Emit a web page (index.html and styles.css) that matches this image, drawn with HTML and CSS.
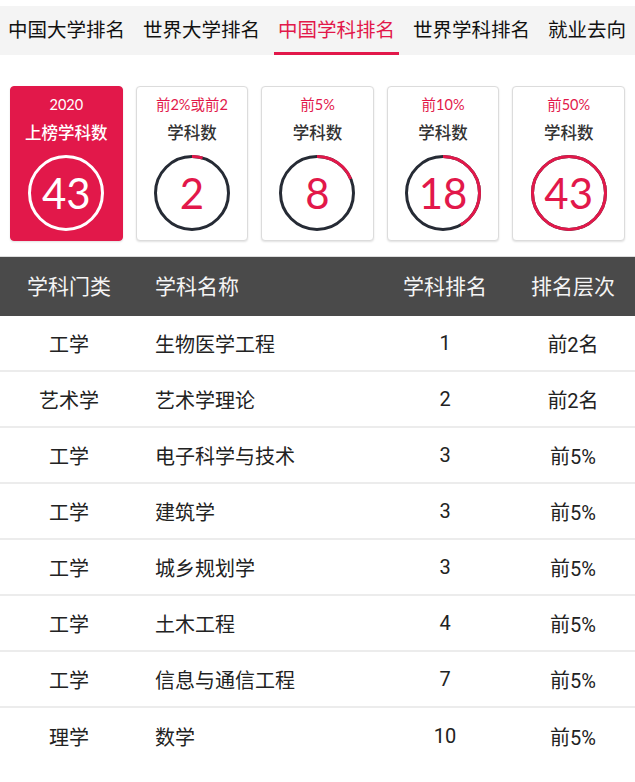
FILE: index.html
```html
<!DOCTYPE html>
<html lang="zh-CN">
<head>
    <meta charset="UTF-8">
    <meta name="viewport" content="width=device-width, initial-scale=1.0">
    <title>中国学科排名</title>
    <link rel="stylesheet" href="styles.css">
</head>
<body>

    <!-- Tabs -->
    <div class="tabs">
        <div class="tab">中国大学排名</div>
        <div class="tab">世界大学排名</div>
        <div class="tab active">中国学科排名</div>
        <div class="tab">世界学科排名</div>
        <div class="tab">就业去向</div>
    </div>

    <!-- Summary cards -->
    <div class="cards">
        <div class="card total">
            <div class="card-top">2020</div>
            <div class="card-title">上榜学科数</div>
            <div class="ring">
                <svg viewBox="0 0 76 76">
                    <circle cx="38" cy="38" r="36.5" class="ring-full"></circle>
                </svg>
                <span class="ring-num">43</span>
            </div>
        </div>

        <div class="card">
            <div class="card-top">前2%或前2</div>
            <div class="card-title">学科数</div>
            <div class="ring">
                <svg viewBox="0 0 76 76">
                    <circle cx="38" cy="38" r="36.5" class="ring-bg"></circle>
                    <circle cx="38" cy="38" r="36.5" class="ring-bar" stroke-dasharray="10.7 229.4"></circle>
                </svg>
                <span class="ring-num">2</span>
            </div>
        </div>

        <div class="card">
            <div class="card-top">前5%</div>
            <div class="card-title">学科数</div>
            <div class="ring">
                <svg viewBox="0 0 76 76">
                    <circle cx="38" cy="38" r="36.5" class="ring-bg"></circle>
                    <circle cx="38" cy="38" r="36.5" class="ring-bar" stroke-dasharray="42.7 229.4"></circle>
                </svg>
                <span class="ring-num">8</span>
            </div>
        </div>

        <div class="card">
            <div class="card-top">前10%</div>
            <div class="card-title">学科数</div>
            <div class="ring">
                <svg viewBox="0 0 76 76">
                    <circle cx="38" cy="38" r="36.5" class="ring-bg"></circle>
                    <circle cx="38" cy="38" r="36.5" class="ring-bar" stroke-dasharray="96 229.4"></circle>
                </svg>
                <span class="ring-num">18</span>
            </div>
        </div>

        <div class="card">
            <div class="card-top">前50%</div>
            <div class="card-title">学科数</div>
            <div class="ring">
                <svg viewBox="0 0 76 76">
                    <circle cx="38" cy="38" r="36.5" class="ring-bg"></circle>
                    <circle cx="38" cy="38" r="36.5" class="ring-bar" stroke-dasharray="229.4 229.4"></circle>
                </svg>
                <span class="ring-num">43</span>
            </div>
        </div>
    </div>

    <!-- Subject table -->
    <div class="table">
        <div class="row head">
            <div class="c1">学科门类</div>
            <div class="c2">学科名称</div>
            <div class="c3">学科排名</div>
            <div class="c4">排名层次</div>
        </div>
        <div class="row">
            <div class="c1">工学</div>
            <div class="c2">生物医学工程</div>
            <div class="c3">1</div>
            <div class="c4">前2名</div>
        </div>
        <div class="row">
            <div class="c1">艺术学</div>
            <div class="c2">艺术学理论</div>
            <div class="c3">2</div>
            <div class="c4">前2名</div>
        </div>
        <div class="row">
            <div class="c1">工学</div>
            <div class="c2">电子科学与技术</div>
            <div class="c3">3</div>
            <div class="c4">前5%</div>
        </div>
        <div class="row">
            <div class="c1">工学</div>
            <div class="c2">建筑学</div>
            <div class="c3">3</div>
            <div class="c4">前5%</div>
        </div>
        <div class="row">
            <div class="c1">工学</div>
            <div class="c2">城乡规划学</div>
            <div class="c3">3</div>
            <div class="c4">前5%</div>
        </div>
        <div class="row">
            <div class="c1">工学</div>
            <div class="c2">土木工程</div>
            <div class="c3">4</div>
            <div class="c4">前5%</div>
        </div>
        <div class="row">
            <div class="c1">工学</div>
            <div class="c2">信息与通信工程</div>
            <div class="c3">7</div>
            <div class="c4">前5%</div>
        </div>
        <div class="row">
            <div class="c1">理学</div>
            <div class="c2">数学</div>
            <div class="c3">10</div>
            <div class="c4">前5%</div>
        </div>
    </div>

</body>
</html>
```

FILE: styles.css
```css
/* Page */
body {
    margin: 0;
    font-family: Roboto, "Noto Sans CJK SC", sans-serif;
    background: #fff;
    color: #222;
    overflow: hidden;
}

/* Tabs */
.tabs {
    margin-top: 6px;
    height: 49px;
    background: #f4f4f4;
    display: flex;
    gap: 10px;
    padding-left: 4px;
    white-space: nowrap;
}

.tab {
    padding: 0 4px;
    font-size: 19.5px;
    line-height: 50px;
    color: #111;
    position: relative;
}

.tab.active {
    color: #e2184a;
}

.tab.active::after {
    content: "";
    position: absolute;
    left: 0;
    right: 0;
    bottom: 0;
    height: 3px;
    background: #e2184a;
}

/* Cards */
.cards {
    display: grid;
    grid-template-columns: repeat(5, 1fr);
    gap: 13px;
    padding: 0 10px;
    margin-top: 31px;
}

.card {
    height: 155px;
    box-sizing: border-box;
    border: 1px solid #dcdcdc;
    border-radius: 4px;
    box-shadow: 0 1px 2px rgba(0, 0, 0, 0.12);
    text-align: center;
    background: #fff;
}

.card-top {
    margin-top: 8px;
    font-size: 14.5px;
    line-height: 20px;
    color: #e2184a;
    font-family: Lato, "Noto Sans CJK SC", sans-serif;
}

.card-title {
    margin-top: 9px;
    font-size: 16.5px;
    line-height: 20px;
    color: #333;
    font-weight: 500;
}

.ring {
    position: relative;
    width: 76px;
    height: 76px;
    margin: 11px auto 0;
}

.ring svg {
    display: block;
    width: 76px;
    height: 76px;
    transform: rotate(-90deg);
}

.ring circle {
    fill: none;
    stroke-width: 3;
}

.ring-bg {
    stroke: #262b35;
}

.ring-bar {
    stroke: #e2184a;
}

.ring-full {
    stroke: #fff;
}

.ring-num {
    position: absolute;
    left: 0;
    right: 0;
    top: 0;
    line-height: 76px;
    font-size: 42px;
    font-family: Lato, sans-serif;
    color: #e2184a;
}

/* Red total card */
.card.total {
    background: #e2184a;
    border-color: #e2184a;
}

.card.total .card-top,
.card.total .card-title,
.card.total .ring-num {
    color: #fff;
}

/* Table */
.table {
    margin-top: 15px;
    border-top: 1px solid #ddd;
}

.row {
    display: grid;
    grid-template-columns: 138px 241px 132px 124px;
    height: 56px;
    align-items: center;
    font-size: 20px;
    border-bottom: 2px solid #ececec;
    box-sizing: border-box;
}

.row.head {
    height: 59px;
    background: #4a4a4a;
    color: #f4f4f4;
    font-size: 21px;
    border-bottom: none;
    padding-bottom: 3px;
}

.c1, .c3, .c4 {
    text-align: center;
}

.c2 {
    padding-left: 17px;
}

.row:last-child {
    border-bottom: none;
}
```
